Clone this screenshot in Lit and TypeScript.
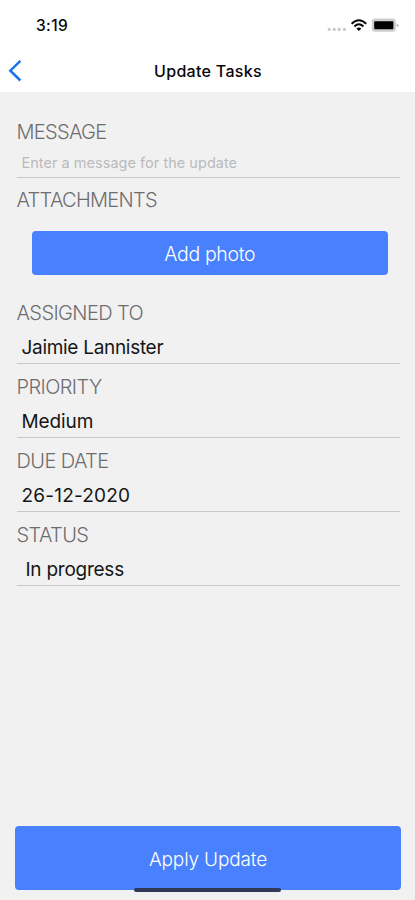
import { LitElement, html, css, svg } from "lit";
import { customElement, property } from "lit/decorators.js";

@customElement("status-bar")
class StatusBar extends LitElement {
  static styles = css`
    :host { display: flex; height: 50px; align-items: center; justify-content: space-between; padding: 0 16px 0 36px; box-sizing: border-box; }
    .time { font-size: 15.5px; line-height: 20px; font-weight: 500; letter-spacing: 0.4px; padding-top: 2px; }
    svg { display: block; }
  `;
  render() {
    return html`
      <span class="time">3:19</span>
      <svg width="74" height="20" viewBox="0 0 74 20">
        ${[4.2, 9.2, 14.2, 19.4].map((x) => svg`<circle cx=${x} cy="14.4" r="1.6" fill="#c9c9c9" />`)}
        <g fill="none" stroke="#050505" stroke-width="2">
          <path d="M26.6 8.8 Q33.9 1.8 41.2 8.8" />
          <path d="M29.4 11.4 Q33.9 7.2 38.4 11.4" />
        </g>
        <path d="M31.4 13.4 Q33.9 11.6 36.4 13.4 L33.9 16Z" fill="#050505" />
        <rect x="46.8" y="3.4" width="24" height="13.4" rx="3.2" fill="#cfcccc" />
        <rect x="49.2" y="6.2" width="19.2" height="8" rx="0.8" fill="#000" />
        <path d="M71.6 8.4 Q73.6 8.8 73.6 10.2 Q73.6 11.6 71.6 12Z" fill="#bdbdbd" />
      </svg>
    `;
  }
}

@customElement("nav-header")
class NavHeader extends LitElement {
  static styles = css`
    :host { display: grid; grid-template-columns: 40px 1fr 40px; align-items: center; height: 42px; }
    svg { display: block; margin-left: 8px; }
    .title { text-align: center; font-size: 16px; line-height: 20px; font-weight: 500; letter-spacing: 0.3px; padding-left: 1px; }
  `;
  render() {
    return html`
      <svg width="16" height="22" viewBox="0 0 16 22">
        <path d="M12.4 0.9 L2.3 10.7 L12.4 20.5" fill="none" stroke="#1674f0" stroke-width="2.5" />
      </svg>
      <span class="title">Update Tasks</span>
    `;
  }
}

@customElement("form-field")
class FormField extends LitElement {
  @property() label = "";
  @property() value = "";
  @property() placeholder = "";
  static styles = css`
    :host { display: flex; flex-direction: column; height: 74px; box-sizing: border-box; padding-top: 11px; border-bottom: 1px solid #c9c9cb; }
    .label { font-size: 20px; line-height: 24px; font-weight: 300; color: #6d6d6f; letter-spacing: var(--label-spacing, -0.6px); }
    .value { font-size: 19px; line-height: 24px; margin-top: 11px; padding-left: var(--value-indent, 5px); color: #161616; letter-spacing: var(--value-spacing, -0.1px); }
    .placeholder { font-size: 14.5px; line-height: 20px; margin-top: 9px; padding-left: 5px; color: #bababc; font-weight: 400; letter-spacing: 0.03px; }
  `;
  render() {
    return html`
      <span class="label">${this.label}</span>
      ${this.value
        ? html`<span class="value">${this.value}</span>`
        : html`<span class="placeholder">${this.placeholder}</span>`}
    `;
  }
}

@customElement("app-root")
class AppRoot extends LitElement {
  static styles = css`
    :host { display: flex; flex-direction: column; height: 900px; background: #f1f1f1; color: #080808; font-family: Inter, "Liberation Sans", sans-serif; position: relative; overflow: hidden; }
    .top { background: #fff; }
    form { display: flex; flex-direction: column; padding: 15px 15px 0 16.5px; }
    .message { height: 71px; padding-top: 13px; --label-spacing: -0.7px; }
    .section { font-size: 20px; line-height: 24px; font-weight: 300; color: #6d6d6f; letter-spacing: -0.7px; margin-top: 10px; }
    button { border: 0; padding: 2px 0 0; font-family: inherit; color: #fff; background: #4880fd; border-radius: 4px; }
    .photo { height: 44px; margin: 19px 12px 15px 15px; font-size: 19.5px; font-weight: 350; letter-spacing: -0.35px; }
    .person { --value-spacing: -0.3px; }
    .date { --value-spacing: 0.2px; }
    .status { --value-indent: 9px; --value-spacing: -0.25px; }
    .apply { height: 64px; margin: auto 14px 10px 15px; font-size: 19px; font-weight: 350; letter-spacing: -0.15px; }
    .home { position: absolute; left: 134px; top: 887.5px; width: 147px; height: 4.5px; border-radius: 3px; background: #303956; }
  `;
  render() {
    return html`
      <div class="top">
        <status-bar></status-bar>
        <nav-header></nav-header>
      </div>
      <form>
        <form-field class="message" label="MESSAGE" placeholder="Enter a message for the update"></form-field>
        <span class="section">ATTACHMENTS</span>
        <button type="button" class="photo">Add photo</button>
        <form-field class="person" label="ASSIGNED TO" value="Jaimie Lannister"></form-field>
        <form-field label="PRIORITY" value="Medium"></form-field>
        <form-field class="date" label="DUE DATE" value="26-12-2020"></form-field>
        <form-field class="status" label="STATUS" value="In progress"></form-field>
      </form>
      <button type="button" class="apply">Apply Update</button>
      <div class="home"></div>
    `;
  }
}
